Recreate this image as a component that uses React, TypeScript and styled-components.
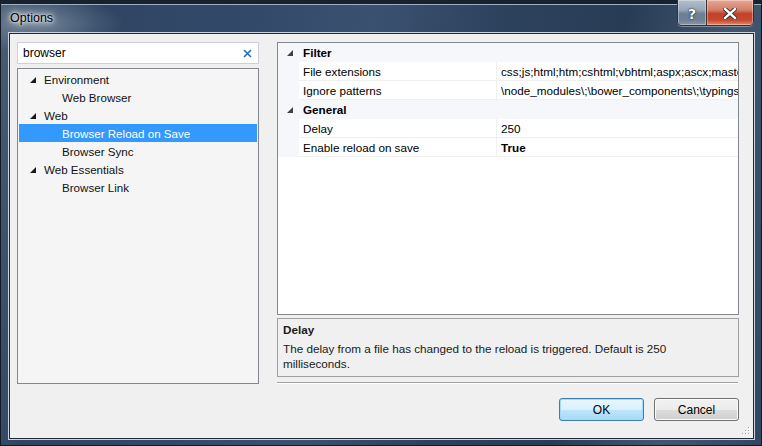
import React from "react";
import styled, { createGlobalStyle } from "styled-components";

const Global = createGlobalStyle`
  html, body { margin: 0; padding: 0; background: #1b2738; }
  * { box-sizing: border-box; }
  body { font-family: "Liberation Sans", Arial, sans-serif; font-size: 11.7px; color: #000; }
`;

const FS = "11.7px";

const Frame = styled.div`
  width: 762px;
  height: 446px;
  display: flex;
  flex-direction: column;
  padding: 0 8px 7px 9px;
  border-top: 4px solid #18222f;
  background:
    radial-gradient(ellipse 120px 40px at 40px 20px, rgba(200, 215, 230, 0.35), transparent 70%),
    linear-gradient(100deg, #4a5d74 0%, #2f4562 12%, #33496a 30%, #3a5170 45%, #2d425d 60%, #293c56 75%, #42576f 88%, #314662 100%);
  box-shadow: inset 1px 0 0 #121a25, inset -1px 0 0 #121a25, inset 0 -1px 0 #121a25, inset 0 1px 0 #9eb0c4;
`;

const TitleBar = styled.div`
  height: 29px;
  display: flex;
  align-items: flex-start;
  justify-content: space-between;
  flex-shrink: 0;
`;

const Title = styled.div`
  margin-top: 7px;
  padding-left: 1px;
  font-family: "Liberation Sans", Arial, sans-serif;
  font-size: 12.5px;
  color: #000;
  text-shadow: 0 0 6px #fff, 0 0 10px #fff, 0 0 3px #fff;
`;

const Caption = styled.div`
  display: flex;
  margin-top: -4px;
  border: 1px solid #273447;
  border-top: none;
  border-radius: 0 0 5px 5px;
  overflow: hidden;
  box-shadow: 0 1px 0 rgba(255,255,255,0.35);
`;

const CapButton = styled.div<{ $close?: boolean }>`
  width: ${(p) => (p.$close ? 47 : 28)}px;
  height: 25px;
  display: flex;
  align-items: center;
  justify-content: center;
  padding-top: 2px;
  color: #fff;
  font-family: "DejaVu Sans", sans-serif;
  font-weight: bold;
  font-size: 14px;
  text-shadow: 0 0 2px #222, 0 0 1px #000;
  border-left: ${(p) => (p.$close ? "1px solid #3a2a2a" : "none")};
  background: ${(p) =>
    p.$close
      ? "linear-gradient(180deg, #e6a894 0%, #d47f66 40%, #c2412a 55%, #c8472e 80%, #e08a6a 100%)"
      : "linear-gradient(180deg, #b3bfcc 0%, #97a6b7 40%, #6d7f94 55%, #6f8197 80%, #8796a8 100%)"};
  box-shadow: inset 0 0 0 1px rgba(255, 255, 255, 0.35);
`;

const Client = styled.div`
  position: relative;
  flex: 1;
  display: grid;
  grid-template-columns: 242px 462px;
  column-gap: 18px;
  padding: 8px 14px 0 7px;
  background: #f0f0f0;
  border: 1px solid #1f2937;
  box-shadow: 0 0 0 1px #c9d4df;
`;

const LeftCol = styled.div`
  display: flex;
  flex-direction: column;
  gap: 4px;
`;

const Search = styled.div`
  height: 22px;
  display: flex;
  align-items: center;
  justify-content: space-between;
  padding: 0 6px 0 5px;
  background: #fff;
  border: 1px solid #cdd0dc;
  font-size: 12px;
`;

const Tree = styled.div`
  height: 316px;
  padding: 1px 1px;
  background: #f5f5f5;
  border: 1px solid #838790;
  display: flex;
  flex-direction: column;
`;

const TreeRow = styled.div<{ $level: number; $selected?: boolean }>`
  height: 18px;
  display: flex;
  align-items: center;
  padding-left: ${(p) => (p.$level === 0 ? 11 : 43)}px;
  gap: 8px;
  background: ${(p) => (p.$selected ? "#3399ff" : "transparent")};
  color: ${(p) => (p.$selected ? "#fff" : "#111")};
  font-size: 11.6px;
  white-space: nowrap;
`;

const Expander = styled.svg`
  width: 6px;
  height: 6px;
  flex-shrink: 0;
  margin-top: 1px;
`;

const RightCol = styled.div`
  display: flex;
  flex-direction: column;
  min-width: 0;
`;

const Grid = styled.div`
  height: 273px;
  background: #fff;
  border: 1px solid #838790;
  overflow: hidden;
  display: flex;
  flex-direction: column;
`;

const CatRow = styled.div`
  height: 19px;
  display: flex;
  align-items: center;
  background: #f5f7fa;
  font-weight: bold;
  font-size: ${FS};
  flex-shrink: 0;
`;

const CatGutter = styled.div`
  width: 21px;
  display: flex;
  justify-content: center;
  padding-left: 3px;
`;

const CatLabel = styled.span`
  padding-left: 4px;
`;

const PropRow = styled.div`
  height: 19px;
  display: flex;
  background: #f5f7fa;
  flex-shrink: 0;
`;

const PropName = styled.div`
  margin-left: 21px;
  width: 198px;
  padding-left: 4px;
  display: flex;
  align-items: center;
  background: #fff;
  border-bottom: 1px solid #f0f0f0;
  border-right: 1px solid #f0f0f0;
  font-size: ${FS};
  white-space: nowrap;
`;

const PropValue = styled.div<{ $bold?: boolean }>`
  flex: 1;
  min-width: 0;
  padding-left: 4px;
  display: flex;
  align-items: center;
  background: #fff;
  border-bottom: 1px solid #f0f0f0;
  font-size: ${FS};
  font-weight: ${(p) => (p.$bold ? "bold" : "normal")};
  white-space: nowrap;
  overflow: hidden;
`;

const Desc = styled.div`
  margin-top: 3px;
  height: 59px;
  border: 1px solid #a0a0a0;
  padding: 3px 30px 3px 5px;
  font-size: ${FS};
  line-height: 15px;
  color: #1a1a1a;
`;

const DescTitle = styled.div`
  font-weight: bold;
  margin-bottom: 4px;
`;

const Separator = styled.div`
  margin-top: 5px;
  height: 2px;
  border-top: 1px solid #a0a0a0;
  border-bottom: 1px solid #fff;
  margin-right: 1px;
`;

const Buttons = styled.div`
  margin-top: 14px;
  display: flex;
  justify-content: flex-end;
  gap: 10px;
`;

const Button = styled.button<{ $default?: boolean }>`
  width: 85px;
  height: 23px;
  border-radius: 3px;
  font-family: "Liberation Sans", Arial, sans-serif;
  font-size: 12px;
  color: #000;
  padding: 0;
  border: 1px solid ${(p) => (p.$default ? "#3c7fb1" : "#707070")};
  background: ${(p) =>
    p.$default
      ? "linear-gradient(180deg, #eaf6fd 0%, #d9f0fc 50%, #bee6fd 50%, #a7d9f5 100%)"
      : "linear-gradient(180deg, #f2f2f2 0%, #ebebeb 50%, #dddddd 50%, #cfcfcf 100%)"};
  box-shadow: inset 0 0 0 1px ${(p) => (p.$default ? "#9fdcf8" : "#fcfcfc")};
`;

const Grip = styled.svg`
  position: absolute;
  right: 2px;
  bottom: 2px;
  width: 10px;
  height: 10px;
`;

const tri = (fill: string) => (
  <Expander viewBox="0 0 6 6">
    <polygon points="6,0 6,6 0,6" fill={fill} />
  </Expander>
);

export default function App() {
  return (
    <>
      <Global />
      <Frame>
        <TitleBar>
          <Title>Options</Title>
          <Caption>
            <CapButton>?</CapButton>
            <CapButton $close>
              <svg width="14" height="11" viewBox="0 0 14 11">
                <path d="M2 1 L12 10 M12 1 L2 10" stroke="#2a2a2a" strokeWidth="4.2" strokeLinecap="square" />
                <path d="M2 1 L12 10 M12 1 L2 10" stroke="#fff" strokeWidth="2.4" strokeLinecap="square" />
              </svg>
            </CapButton>
          </Caption>
        </TitleBar>
        <Client>
          <LeftCol>
            <Search>
              <span>browser</span>
              <svg width="9" height="9" viewBox="0 0 9 9">
                <path d="M1 1 L8 8 M8 1 L1 8" stroke="#1c6ec3" strokeWidth="1.6" />
              </svg>
            </Search>
            <Tree>
              <TreeRow $level={0}>{tri("#1a1a1a")}Environment</TreeRow>
              <TreeRow $level={1}>Web Browser</TreeRow>
              <TreeRow $level={0}>{tri("#1a1a1a")}Web</TreeRow>
              <TreeRow $level={1} $selected>Browser Reload on Save</TreeRow>
              <TreeRow $level={1}>Browser Sync</TreeRow>
              <TreeRow $level={0}>{tri("#1a1a1a")}Web Essentials</TreeRow>
              <TreeRow $level={1}>Browser Link</TreeRow>
            </Tree>
          </LeftCol>
          <RightCol>
            <Grid>
              <CatRow>
                <CatGutter>{tri("#404040")}</CatGutter>
                <CatLabel>Filter</CatLabel>
              </CatRow>
              <PropRow>
                <PropName>File extensions</PropName>
                <PropValue>css;js;html;htm;cshtml;vbhtml;aspx;ascx;master;cs;vb</PropValue>
              </PropRow>
              <PropRow>
                <PropName>Ignore patterns</PropName>
                <PropValue>\node_modules\;\bower_components\;\typings\</PropValue>
              </PropRow>
              <CatRow>
                <CatGutter>{tri("#404040")}</CatGutter>
                <CatLabel>General</CatLabel>
              </CatRow>
              <PropRow>
                <PropName>Delay</PropName>
                <PropValue>250</PropValue>
              </PropRow>
              <PropRow>
                <PropName>Enable reload on save</PropName>
                <PropValue $bold>True</PropValue>
              </PropRow>
            </Grid>
            <Desc>
              <DescTitle>Delay</DescTitle>
              The delay from a file has changed to the reload is triggered. Default is 250 milliseconds.
            </Desc>
            <Separator />
            <Buttons>
              <Button $default>OK</Button>
              <Button>Cancel</Button>
            </Buttons>
          </RightCol>
          <Grip viewBox="0 0 10 10">
            {[
              [8, 2], [8, 5], [5, 5], [8, 8], [5, 8], [2, 8],
            ].map(([x, y], i) => (
              <g key={i}>
                <rect x={x} y={y} width="1" height="1" fill="#fff" />
                <rect x={x - 1} y={y - 1} width="1" height="1" fill="#a0a0a0" />
              </g>
            ))}
          </Grip>
        </Client>
      </Frame>
    </>
  );
}
